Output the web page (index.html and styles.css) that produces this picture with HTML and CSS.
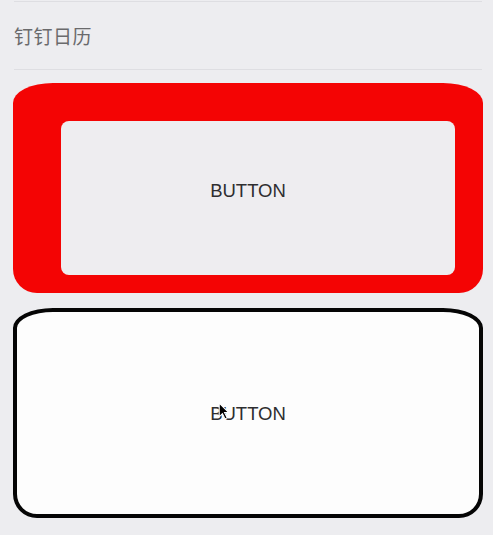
FILE: index.html
```html
<!DOCTYPE html>
<html lang="zh">
<head>
<meta charset="utf-8">
<title>钉钉日历</title>
<link rel="stylesheet" href="styles.css">
</head>
<body>
<div class="page">
  <div class="header"><span class="title">钉钉日历</span></div>
  <div class="btn btn-red">
    <div class="btn-inner"></div>
    <span class="btn-label btn-label-red">BUTTON</span>
  </div>
  <div class="btn btn-outline">
    <span class="btn-label">BUTTON<svg class="cursor" width="12" height="18" viewBox="0 0 11 17"><path d="M1 1 L1 14 L4 11 L6.5 16 L8.5 15 L6 10 L10 10 Z" fill="#000" stroke="#fff" stroke-width="1"/></svg></span>
  </div>
</div>
</body>
</html>
```
FILE: styles.css
```css
html, body {
  margin: 0;
  padding: 0;
  background: #ededf0;
}
.page {
  padding: 1px 10px 0 13px;
  width: 470px;
  font-family: "Liberation Sans", Arial, sans-serif;
}
.header {
  margin: 0 1px;
  height: 67px;
  border-top: 1px solid #dedee2;
  border-bottom: 1px solid #dedee2;
  display: flex;
  align-items: center;
}
.title {
  font-family: "Noto Sans CJK SC", "Noto Sans", sans-serif;
  font-size: 19px;
  color: #6a6a6c;
  letter-spacing: 0.5px;
}
.btn {
  display: grid;
  height: 210px;
  box-sizing: border-box;
  border-radius: 40px 40px 24px 24px / 20px 20px 24px 24px;
}
.btn > * {
  grid-area: 1 / 1;
}
.btn-red {
  margin-top: 13px;
  background: #f40404;
}
.btn-inner {
  margin: 38px 28px 18px 48px;
  background: #eeedf0;
  border-radius: 8px;
}
.btn-label {
  place-self: center;
  font-size: 18.5px;
  color: #2e2e30;
  position: relative;
  top: 1px;
}
.btn-label-red {
  top: 3px;
}
.btn-outline {
  margin-top: 15px;
  border: 4px solid #050505;
  background: #fdfdfd;
}
.cursor {
  position: absolute;
  left: 8px;
  top: -1px;
}
```
